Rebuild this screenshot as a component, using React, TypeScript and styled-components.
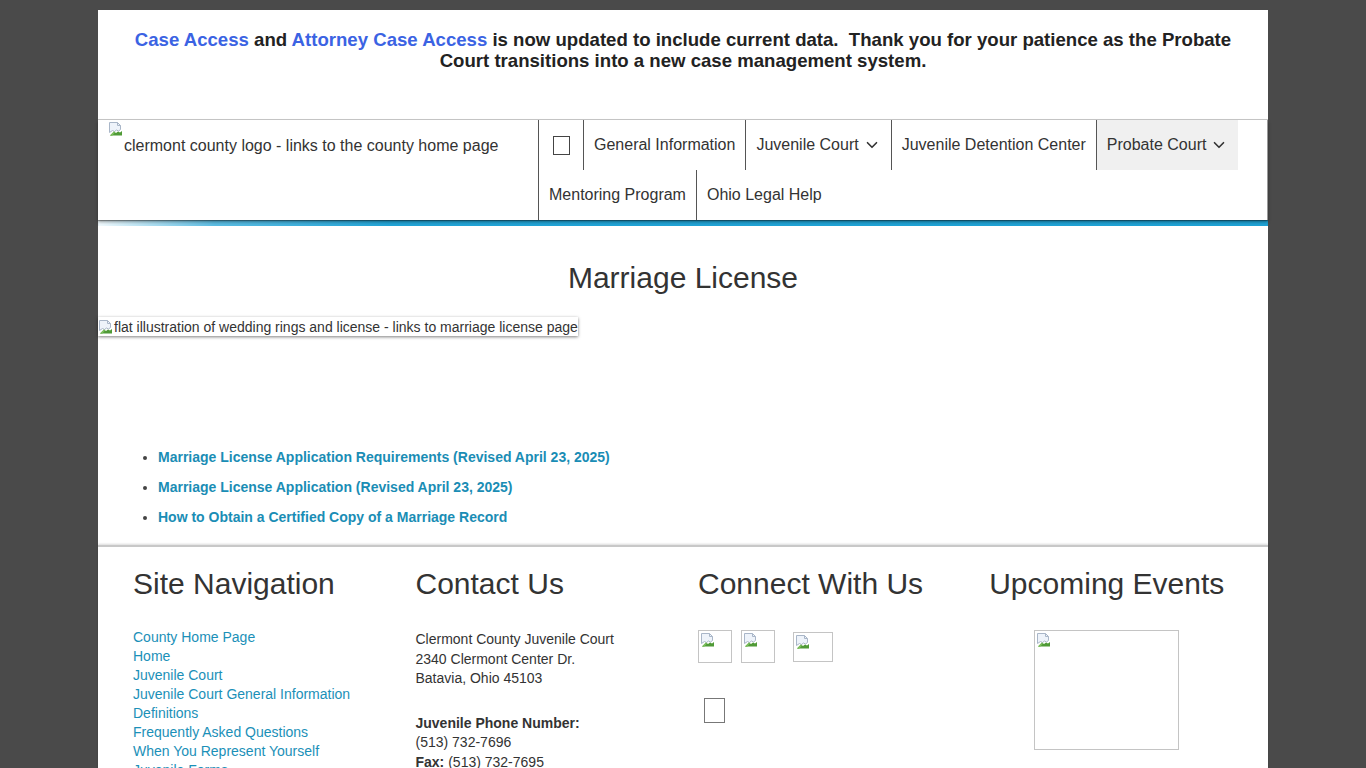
import styled, { createGlobalStyle } from "styled-components";
import { ChevronDown } from "lucide-react";

const GlobalStyle = createGlobalStyle`
  body {
    margin: 0;
    background: #4a4a4a;
    font-family: "Liberation Sans", Arial, sans-serif;
  }
`;

function BrokenIcon() {
  return (
    <svg width="16" height="16" viewBox="0 0 16 16">
      <path d="M1.5 1.5h8l3 3v4l-2 1.5-2-1-2 1.5-2-1-3 2z" fill="#eef3fa" stroke="#a9b6c8" />
      <path d="M9.5 1.5v3h3" fill="none" stroke="#a9b6c8" />
      <path d="M2 14.5l4-4 2 1.5 2-1.5 2 1 2-1.5v4.5z" fill="#4f9a36" />
      <path d="M2 14.5l4-4 1 1-3 3.5z" fill="#7cbf5c" />
    </svg>
  );
}

const navLinks = [
  "County Home Page",
  "Home",
  "Juvenile Court",
  "Juvenile Court General Information",
  "Definitions",
  "Frequently Asked Questions",
  "When You Represent Yourself",
  "Juvenile Forms",
];

const documents = [
  "Marriage License Application Requirements (Revised April 23, 2025)",
  "Marriage License Application (Revised April 23, 2025)",
  "How to Obtain a Certified Copy of a Marriage Record",
];

export default function App() {
  return (
    <>
      <GlobalStyle />
      <Page>
        <Notice>
          <NoticeLink href="#">Case Access</NoticeLink> and{" "}
          <NoticeLink href="#">Attorney Case Access</NoticeLink> is now updated to include
          current data.{"\u00a0"} Thank you for your patience as the Probate Court
          transitions into a new case management system.
        </Notice>

        <Header>
          <Logo href="#">
            <BrokenIcon />
            <LogoAlt>clermont county logo - links to the county home page</LogoAlt>
          </Logo>
          <Menu>
            <MenuItem $narrow>
              <Toggle />
            </MenuItem>
            <MenuItem>General Information</MenuItem>
            <MenuItem>
              Juvenile Court
              <ChevronDown size={18} strokeWidth={2.2} />
            </MenuItem>
            <MenuItem>Juvenile Detention Center</MenuItem>
            <MenuItem $active>
              Probate Court
              <ChevronDown size={18} strokeWidth={2.2} />
            </MenuItem>
            <MenuItem>Mentoring Program</MenuItem>
            <MenuItem>Ohio Legal Help</MenuItem>
          </Menu>
        </Header>
        <Stripe />

        <Main>
          <Title>Marriage License</Title>
          <Banner href="#">
            <BrokenIcon />
            flat illustration of wedding rings and license - links to marriage license page
          </Banner>
          <DocList>
            {documents.map((d) => (
              <DocItem key={d}>
                <DocLink href="#">{d}</DocLink>
              </DocItem>
            ))}
          </DocList>
        </Main>

        <Footer>
          <Column>
            <ColumnTitle>Site Navigation</ColumnTitle>
            <LinkList>
              {navLinks.map((l) => (
                <FooterLink key={l} href="#">
                  {l}
                </FooterLink>
              ))}
            </LinkList>
          </Column>
          <Column>
            <ColumnTitle>Contact Us</ColumnTitle>
            <Contact>
              <ContactPara>
                Clermont County Juvenile Court
                <br />
                2340 Clermont Center Dr.
                <br />
                Batavia, Ohio 45103
              </ContactPara>
              <ContactPara>
                <b>Juvenile Phone Number:</b>
                <br />
                (513) 732-7696
                <br />
                <b>Fax:</b> (513) 732-7695
              </ContactPara>
            </Contact>
          </Column>
          <Column>
            <ColumnTitle>Connect With Us</ColumnTitle>
            <SocialRow>
              <ImgFrame $w={34} $h={33} $gap={9}>
                <BrokenIcon />
              </ImgFrame>
              <ImgFrame $w={34} $h={33} $gap={18}>
                <BrokenIcon />
              </ImgFrame>
              <ImgFrame $w={40} $h={30} $top={2}>
                <BrokenIcon />
              </ImgFrame>
            </SocialRow>
            <EmptyBox />
          </Column>
          <Column $center>
            <ColumnTitle>Upcoming Events</ColumnTitle>
            <EventFrame>
              <BrokenIcon />
            </EventFrame>
          </Column>
        </Footer>
      </Page>
    </>
  );
}

const Page = styled.div`
  width: 1170px;
  margin: 10px auto 0;
  background: #fff;
`;

const Notice = styled.div`
  height: 110px;
  box-sizing: border-box;
  padding: 19px 30px 0;
  border-bottom: 1px solid #c8c8c8;
  text-align: center;
  font-size: 18.6px;
  line-height: 21px;
  font-weight: bold;
  color: #222;
`;

const NoticeLink = styled.a`
  color: #3b63e3;
  text-decoration: none;
`;

const Header = styled.header`
  display: flex;
  height: 100px;
  border-right: 1px solid #999;
  box-shadow: 0 2px 3px rgba(0, 0, 0, 0.35);
  position: relative;
`;

const Logo = styled.a`
  width: 440px;
  flex-shrink: 0;
  box-sizing: border-box;
  padding: 1px 0 0 10px;
  color: #333;
  font-size: 16px;
  line-height: 18px;
  text-decoration: none;
  svg {
    display: block;
  }
`;

const LogoAlt = styled.span`
  display: block;
  margin-left: 16px;
`;

const Menu = styled.ul`
  display: flex;
  flex-wrap: wrap;
  align-content: flex-start;
  list-style: none;
  margin: 0;
  padding: 0;
  width: 730px;
`;

const MenuItem = styled.li<{ $active?: boolean; $narrow?: boolean }>`
  height: 50px;
  display: flex;
  align-items: center;
  padding: ${(p) => (p.$narrow ? "0 13px 0 14px" : "0 10px")};
  border-left: 1px solid #555;
  font-size: 16px;
  color: #333;
  background: ${(p) => (p.$active ? "#f0f0f0" : "transparent")};
  white-space: nowrap;
  svg {
    margin-left: 4px;
    color: #333;
  }
`;

const Toggle = styled.span`
  display: block;
  width: 15px;
  height: 17px;
  border: 1px solid #444;
`;

const Stripe = styled.div`
  height: 6px;
  background: linear-gradient(to right, #f2fafd 0%, #5bbce2 10%, #22a4d6 25%, #1fa2d4 100%);
  box-shadow: inset 0 1px 1px rgba(0, 0, 0, 0.35);
`;

const Main = styled.main`
  display: flex;
  flex-direction: column;
`;

const Title = styled.h1`
  margin: 35px 0 0;
  text-align: center;
  font-size: 30px;
  line-height: 34px;
  font-weight: normal;
  color: #333;
`;

const Banner = styled.a`
  margin-top: 22px;
  width: 480px;
  height: 19px;
  display: flex;
  align-items: center;
  font-size: 14px;
  color: #333;
  text-decoration: none;
  white-space: nowrap;
  box-shadow: 0 1px 3px rgba(0, 0, 0, 0.5);
`;

const DocList = styled.ul`
  margin: 111px 0 18px;
  padding-left: 60px;
  color: #444;
  font-size: 14px;
`;

const DocItem = styled.li`
  line-height: 20px;
  margin-bottom: 10px;
  &:last-child {
    margin-bottom: 0;
  }
`;

const DocLink = styled.a`
  color: #1a8db5;
  font-weight: bold;
  text-decoration: none;
`;

const Footer = styled.footer`
  display: grid;
  grid-template-columns: repeat(4, 1fr);
  padding: 20px 20px 30px;
  border-top: 2px solid #c8c8c8;
  box-shadow: 0 -1px 2px rgba(0, 0, 0, 0.15);
`;

const Column = styled.div<{ $center?: boolean }>`
  padding: 0 15px;
  display: flex;
  flex-direction: column;
  align-items: ${(p) => (p.$center ? "center" : "flex-start")};
`;

const ColumnTitle = styled.h2`
  margin: 0 0 27px;
  font-size: 30px;
  line-height: 33px;
  font-weight: normal;
  color: #333;
`;

const LinkList = styled.nav`
  padding-top: 1px;
`;

const FooterLink = styled.a`
  display: block;
  font-size: 14px;
  line-height: 19px;
  color: #1b90b8;
  text-decoration: none;
`;

const Contact = styled.div`
  padding-top: 3px;
  font-size: 14px;
  line-height: 19.5px;
  color: #333;
`;

const ContactPara = styled.p`
  margin: 0 0 25px;
`;

const SocialRow = styled.div`
  display: flex;
  align-items: flex-start;
  padding-top: 3px;
`;

const ImgFrame = styled.span<{ $w: number; $h: number; $gap?: number; $top?: number }>`
  box-sizing: border-box;
  width: ${(p) => p.$w}px;
  height: ${(p) => p.$h}px;
  margin-right: ${(p) => p.$gap ?? 0}px;
  margin-top: ${(p) => p.$top ?? 0}px;
  border: 1px solid #c4c4c4;
  padding: 1px;
  svg {
    display: block;
  }
`;

const EmptyBox = styled.span`
  display: block;
  box-sizing: border-box;
  width: 21px;
  height: 25px;
  margin: 35px 0 0 6px;
  border: 1px solid #777;
`;

const EventFrame = styled.span`
  box-sizing: border-box;
  width: 145px;
  height: 120px;
  margin-top: 3px;
  border: 1px solid #c4c4c4;
  padding: 1px;
  svg {
    display: block;
  }
`;
